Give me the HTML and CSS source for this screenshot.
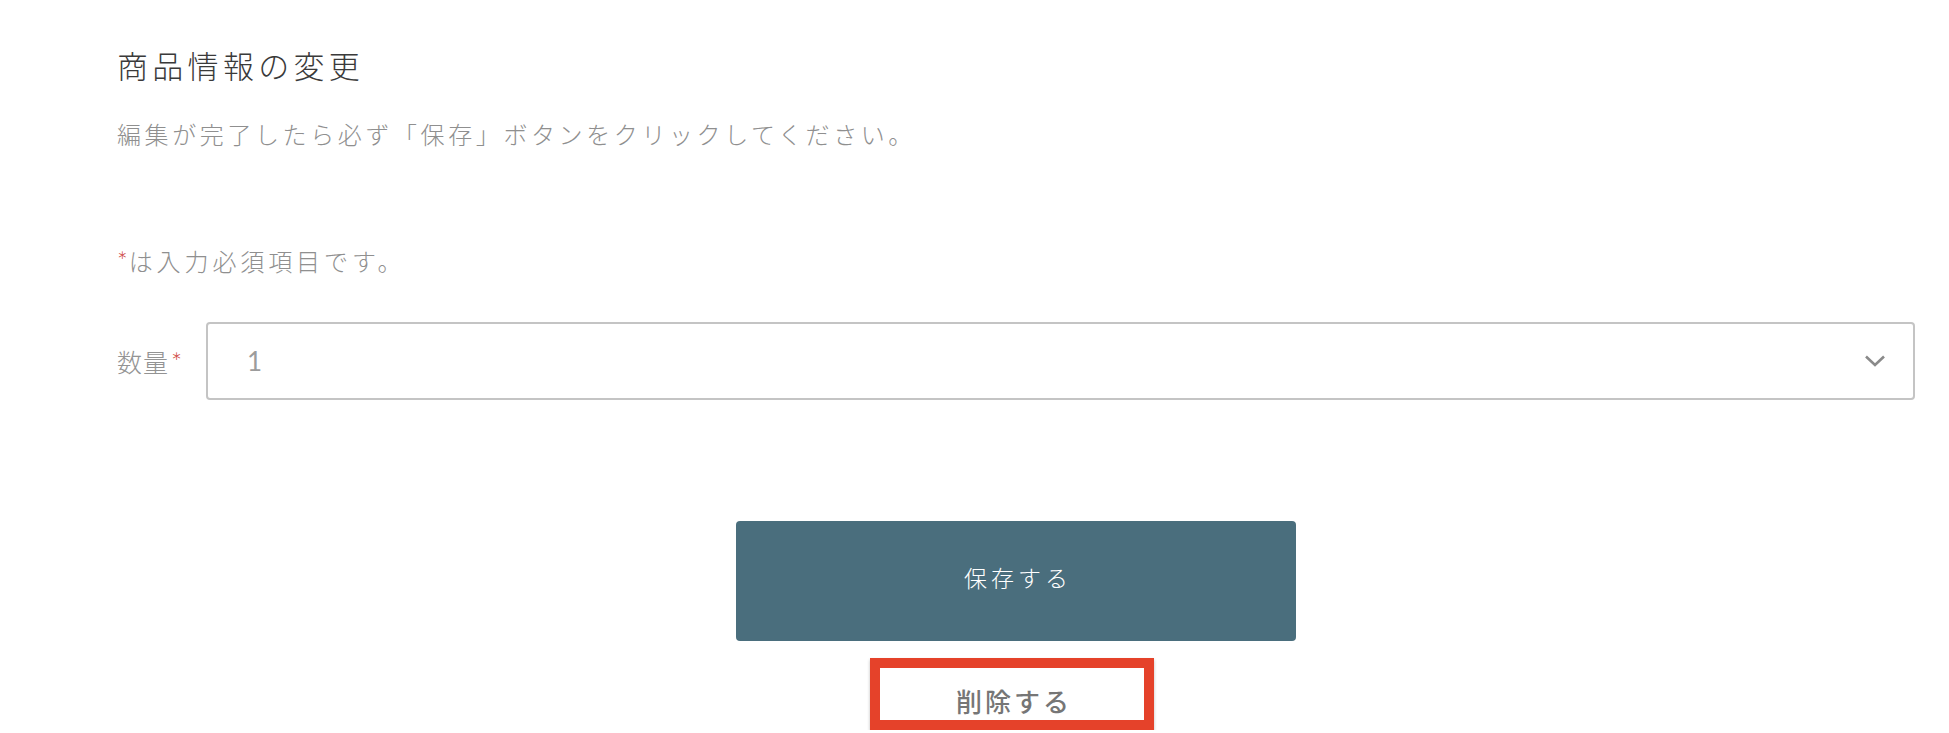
FILE: index.html
```html
<!DOCTYPE html>
<html lang="ja">
<head>
<meta charset="utf-8">
<title>商品情報の変更</title>
<link rel="stylesheet" href="styles.css">
</head>
<body>
<main class="page">
  <h1 class="title">商品情報の変更</h1>
  <p class="lead">編集が完了したら必ず「保存」ボタンをクリックしてください。</p>
  <p class="note"><span class="req">*</span>は入力必須項目です。</p>
  <div class="field">
    <label class="field-label">数量<span class="req">*</span></label>
    <div class="select">
      <span class="select-value">1</span>
      <svg class="chevron" width="22" height="14" viewBox="0 0 22 14" aria-hidden="true"><path d="M2 2.5 L11 11 L20 2.5" fill="none" stroke="#8a8a8a" stroke-width="2.6" stroke-linecap="butt" stroke-linejoin="miter"/></svg>
    </div>
  </div>
  <div class="actions">
    <button class="btn-save" type="button">保存する</button>
    <button class="btn-delete" type="button">削除する</button>
  </div>
</main>
</body>
</html>
```
FILE: styles.css
```css
html, body {
  margin: 0;
  padding: 0;
  background: #ffffff;
}
body {
  font-family: Lato, "Noto Sans CJK JP", "Noto Sans", sans-serif;
  color: #999999;
}
.page {
  padding: 46px 34px 0 117px;
}
.title {
  margin: 0;
  font-size: 31px;
  font-weight: 300;
  line-height: 40px;
  letter-spacing: 4.3px;
  color: #3a3a3a;
}
.lead {
  margin: 33px 0 0;
  font-size: 24px;
  font-weight: 300;
  line-height: 32px;
  letter-spacing: 3.6px;
  color: #8f8f8f;
}
.note {
  margin: 94px 0 0;
  font-size: 24px;
  font-weight: 300;
  line-height: 32px;
  letter-spacing: 3.9px;
  color: #8f8f8f;
}
.req {
  color: #cc3b33;
  letter-spacing: 0;
  margin-left: 2px;
  font-size: 1.05em;
}
.note .req {
  margin-left: 0;
  margin-right: 1px;
}
.field {
  margin-top: 44px;
  display: flex;
  align-items: center;
}
.field-label {
  width: 89px;
  flex: none;
  font-size: 25px;
  font-weight: 300;
  letter-spacing: 1px;
  color: #939393;
}
.select {
  flex: 1;
  height: 78px;
  box-sizing: border-box;
  border: 2px solid #c4c4c4;
  border-radius: 4px;
  display: flex;
  align-items: center;
  justify-content: space-between;
  padding: 0 27px 0 39px;
}
.select-value {
  font-size: 26px;
  color: #9c9c9c;
}
.chevron {
  display: block;
}
.actions {
  display: flex;
  flex-direction: column;
  align-items: center;
  margin-top: 121px;
}
.btn-save {
  width: 560px;
  height: 120px;
  border: 0;
  border-radius: 4px;
  background: #4a6e7d;
  color: #ffffff;
  font-family: "Noto Sans CJK JP", sans-serif;
  font-size: 23px;
  font-weight: 300;
  letter-spacing: 4px;
  padding: 0 0 8px 4px;
}
.btn-delete {
  margin-top: 17px;
  margin-right: 8px;
  width: 284px;
  height: 72px;
  box-sizing: border-box;
  border: 10px solid #e5422a;
  background: #ffffff;
  box-shadow: 0 2px 3px rgba(0, 0, 0, 0.25);
  color: #767676;
  font-family: "Noto Sans CJK JP", sans-serif;
  font-size: 26px;
  font-weight: 500;
  letter-spacing: 3px;
  padding: 14px 0 0 4px;
  line-height: 1;
}
```
